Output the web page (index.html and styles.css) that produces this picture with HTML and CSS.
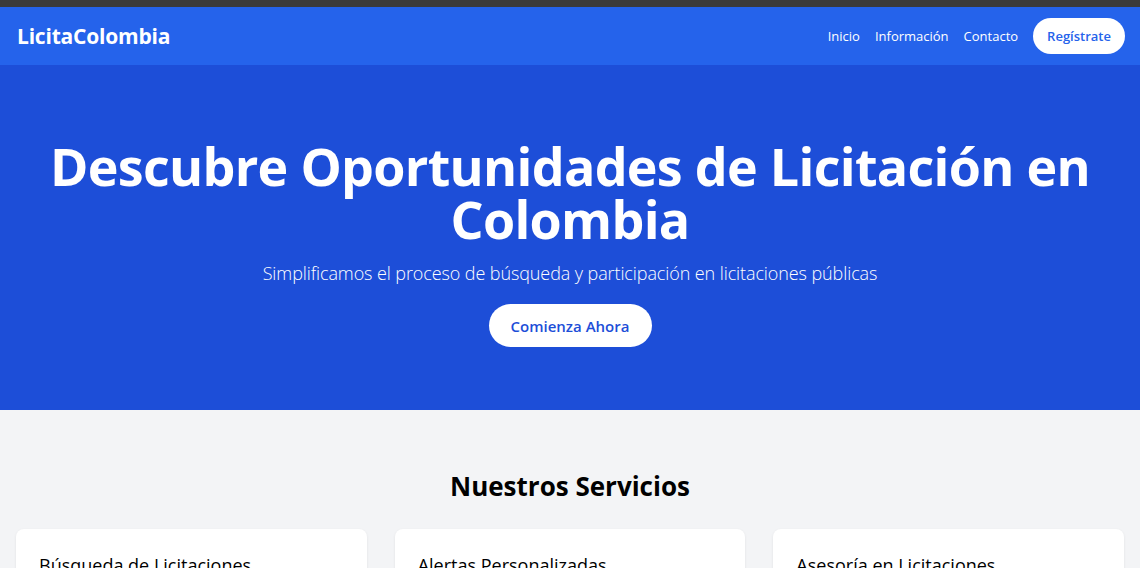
FILE: index.html
```html
<!DOCTYPE html>
<html lang="es">
<head>
<meta charset="utf-8">
<title>LicitaColombia</title>
<link rel="stylesheet" href="styles.css">
</head>
<body>
<div class="topbar"></div>
<header class="header">
  <div class="logo">LicitaColombia</div>
  <nav class="nav">
    <a href="#" class="nav-link">Inicio</a>
    <a href="#" class="nav-link">Información</a>
    <a href="#" class="nav-link">Contacto</a>
    <a href="#" class="nav-btn">Regístrate</a>
  </nav>
</header>
<section class="hero">
  <h1 class="hero-title">Descubre Oportunidades de Licitación en Colombia</h1>
  <p class="hero-sub">Simplificamos el proceso de búsqueda y participación en licitaciones públicas</p>
  <a href="#" class="hero-btn">Comienza Ahora</a>
</section>
<section class="services">
  <h2 class="services-title">Nuestros Servicios</h2>
  <div class="cards">
    <div class="card"><h3 class="card-title">Búsqueda de Licitaciones</h3></div>
    <div class="card"><h3 class="card-title">Alertas Personalizadas</h3></div>
    <div class="card"><h3 class="card-title">Asesoría en Licitaciones</h3></div>
  </div>
</section>
</body>
</html>
```

FILE: styles.css
```css
* { box-sizing: border-box; }
body {
  margin: 0;
  font-family: "Open Sans", "Noto Sans", sans-serif;
  background: #f3f4f6;
  color: #000;
}
.topbar { height: 7px; background: #3b3b3b; }
.header {
  background: #2563eb;
  height: 58px;
  display: flex;
  align-items: center;
  justify-content: space-between;
  padding: 0 15px 0 17px;
}
.logo { color: #fff; font-weight: 700; font-size: 21px; letter-spacing: -0.2px; }
.nav { display: flex; align-items: center; gap: 15px; }
.nav-link { color: #fff; text-decoration: none; font-size: 13px; }
.nav-btn {
  background: #fff; color: #2563eb; text-decoration: none; font-weight: 600;
  font-size: 13px; height: 36px; padding: 0 14px; border-radius: 18px;
  display: flex; align-items: center;
}
.hero {
  background: #1d4ed8;
  height: 345px;
  display: flex; flex-direction: column; align-items: center;
  padding-top: 74px;
  color: #fff;
  text-align: center;
}
.hero-title {
  margin: 0; font-size: 52px; font-weight: 700; line-height: 53px;
  letter-spacing: -0.7px; max-width: 1100px;
}
.hero-sub { margin: 16px 0 0; font-size: 18px; font-weight: 300; letter-spacing: -0.1px; }
.hero-btn {
  margin-top: 19px; background: #fff; color: #1d4ed8; text-decoration: none;
  font-weight: 600; font-size: 15px; height: 43px; width: 163px; border-radius: 22px;
  display: flex; align-items: center; justify-content: center;
}
.services { padding: 58px 16px 0 16px; }
.services-title { margin: 0; text-align: center; font-size: 26px; font-weight: 700; line-height: 36px; }
.cards {
  margin-top: 25px;
  display: grid; grid-template-columns: repeat(3, 1fr); gap: 28px;
}
.card {
  background: #fff; border-radius: 8px; height: 120px;
  box-shadow: 0 1px 3px rgba(0,0,0,0.08);
  padding: 24px 23px;
}
.card-title { margin: 0; font-size: 18px; font-weight: 400; line-height: 24px; }
```
